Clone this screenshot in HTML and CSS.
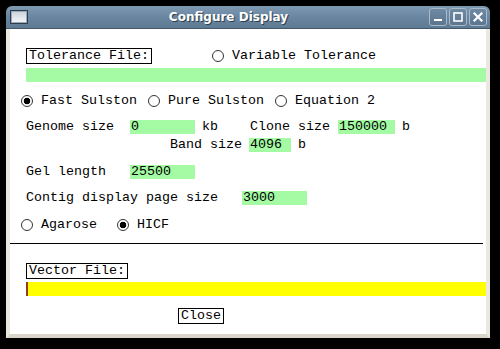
FILE: index.html
```html
<!DOCTYPE html>
<html>
<head>
    <title>Configure Display</title>
    <link rel="stylesheet" href="styles.css">
</head>
<body>
    <div class="window">
        <div class="titlebar">
            <span class="win-icon"></span>
            <span class="title">Configure Display</span>
            <span class="win-buttons">
                <span class="wbtn">
                    <svg width="16" height="16" viewBox="0 0 16 16"><rect x="4" y="10" width="8" height="2" fill="#fff"/></svg>
                </span>
                <span class="wbtn">
                    <svg width="16" height="16" viewBox="0 0 16 16"><rect x="4" y="4" width="8" height="8" fill="none" stroke="#fff" stroke-width="1.6"/></svg>
                </span>
                <span class="wbtn">
                    <svg width="16" height="16" viewBox="0 0 16 16"><path d="M4.5 4.5 L11.5 11.5 M11.5 4.5 L4.5 11.5" stroke="#fff" stroke-width="2.2" stroke-linecap="square"/></svg>
                </span>
            </span>
        </div>

        <div class="client">
            <!-- tolerance file -->
            <div class="row file-row">
                <span class="tag">Tolerance File:</span>
                <span class="radio tol-radio"><span class="knob"></span>Variable Tolerance</span>
            </div>
            <div class="entry green"></div>

            <!-- method -->
            <div class="row radio-row method-row">
                <span class="radio on"><span class="knob"></span>Fast Sulston</span>
                <span class="radio"><span class="knob"></span>Pure Sulston</span>
                <span class="radio"><span class="knob"></span>Equation 2</span>
            </div>

            <div class="row field-row genome-row">
                <span class="lbl w-genome">Genome size</span>
                <span class="val w65">0</span>
                <span class="unit unit-kb">kb</span>
                <span class="lbl w-clone">Clone size</span>
                <span class="val w57">150000</span>
                <span class="unit">b</span>
            </div>

            <div class="row field-row band-row">
                <span class="lbl w-band">Band size</span>
                <span class="val w42">4096</span>
                <span class="unit">b</span>
            </div>

            <div class="row field-row gel-row">
                <span class="lbl w-genome">Gel length</span>
                <span class="val w65">25500</span>
            </div>

            <div class="row field-row contig-row">
                <span class="lbl w-contig">Contig display page size</span>
                <span class="val w65">3000</span>
            </div>

            <div class="row radio-row gel-type-row">
                <span class="radio agarose"><span class="knob"></span>Agarose</span>
                <span class="radio on"><span class="knob"></span>HICF</span>
            </div>

            <div class="separator"></div>

            <!-- vector file -->
            <div class="row vector-row">
                <span class="tag">Vector File:</span>
            </div>
            <div class="entry yellow"><span class="cursor"></span></div>

            <div class="row close-row">
                <span class="tag close-btn">Close</span>
            </div>
        </div>
    </div>
</body>
</html>
```

FILE: styles.css
```css
body {
    margin: 0;
    background-color: #000;
    font-family: "Liberation Mono", "DejaVu Sans Mono", monospace;
    font-size: 13.33px;
    color: #000;
}
.window {
    margin: 6px 0 0 6px;
    width: 484px;
}
.titlebar {
    box-sizing: border-box;
    height: 23px;
    display: flex;
    align-items: center;
    background: linear-gradient(#7f9ab3, #6a86a0 50%, #5f7a93);
    border-radius: 6px 6px 0 0;
    border-bottom: 1px solid #44586b;
}
.win-icon {
    box-sizing: border-box;
    width: 18px;
    height: 14px;
    margin-left: 4px;
    border: 1px solid #2e3e4f;
    background: linear-gradient(#c9d1d9, #f6f8fa);
    box-shadow: inset 0 0 0 1px #9aa9b8;
}
.title {
    flex: 1;
    text-align: center;
    color: #fff;
    font-family: "DejaVu Sans", sans-serif;
    font-weight: bold;
    font-size: 12px;
    text-shadow: 1px 1px 0 #2f3d4b;
}
.win-buttons {
    display: flex;
    gap: 2px;
    margin-right: 3px;
}
.wbtn {
    box-sizing: border-box;
    width: 18px;
    height: 18px;
    border: 1px solid #a9bacb;
    border-radius: 3px;
    background: linear-gradient(#6f8aa4, #5b758e);
    display: flex;
    align-items: center;
    justify-content: center;
}
.client {
    height: 286px;
    padding-top: 19px;
    background-color: #fff;
    border: 4px solid #ebe8e2;
    border-top: 0;
    border-bottom-color: #d9d5cd;
}
.row {
    display: flex;
    align-items: center;
    height: 14px;
    line-height: 14px;
    white-space: pre;
}
.file-row {
    height: 16px;
    padding-left: 16px;
}
.tag {
    border: 1px solid #000;
    padding: 0 2px;
    line-height: 14px;
}
.radio {
    display: flex;
    align-items: center;
    margin-right: 11px;
}
.knob {
    box-sizing: border-box;
    width: 12px;
    height: 12px;
    border: 1px solid #333;
    border-radius: 50%;
    background: #fff;
    margin-right: 8px;
}
.radio.on .knob {
    background: radial-gradient(circle, #000 0 3px, #fff 3.6px);
}
.tol-radio {
    margin-left: 60px;
}
.entry {
    height: 14px;
    margin-left: 16px;
}
.green {
    margin-top: 4px;
    background-color: #a4fba4;
}
.radio-row {
    padding-left: 11px;
}
.method-row {
    margin-top: 12px;
}
.field-row {
    padding-left: 16px;
}
.genome-row {
    margin-top: 12px;
}
.band-row {
    margin-top: 4px;
    padding-left: 160px;
}
.gel-row {
    margin-top: 13px;
}
.contig-row {
    margin-top: 12px;
}
.lbl {
    display: inline-block;
}
.w-genome { width: 104px; }
.w-clone { width: 88px; }
.w-band { width: 79px; }
.w-contig { width: 216px; }
.val {
    display: inline-block;
    box-sizing: border-box;
    height: 14px;
    padding-left: 1px;
    background-color: #a4fba4;
}
.w65 { width: 65px; }
.w57 { width: 57px; }
.w42 { width: 42px; }
.unit {
    margin-left: 7px;
}
.unit-kb {
    width: 48px;
}
.gel-type-row {
    margin-top: 13px;
}
.agarose {
    margin-right: 20px;
}
.separator {
    height: 1px;
    margin-top: 11px;
    margin-right: 3px;
    background-color: #000;
}
.vector-row {
    height: 16px;
    margin-top: 19px;
    padding-left: 16px;
}
.yellow {
    margin-top: 3px;
    background-color: #ffff00;
}
.cursor {
    display: block;
    width: 2px;
    height: 14px;
    background-color: #9a3a14;
}
.close-row {
    height: 16px;
    margin-top: 12px;
    padding-left: 168px;
}
```
